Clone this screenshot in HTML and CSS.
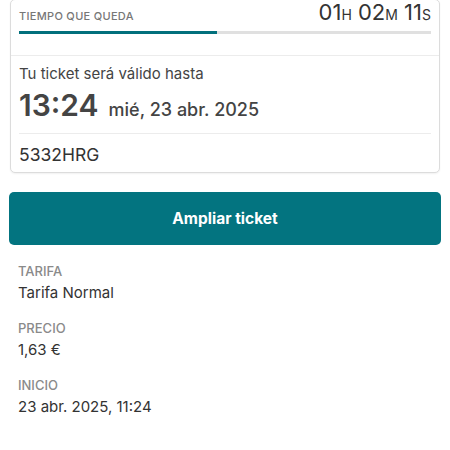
FILE: index.html
```html
<!DOCTYPE html>
<html lang="es">
<head>
<meta charset="utf-8">
<title>Ticket</title>
<link rel="stylesheet" href="styles.css">
</head>
<body>
<div class="page">
  <section class="card">
    <div class="timer">
      <div class="timer-row">
        <span class="timer-label">TIEMPO QUE QUEDA</span>
        <span class="timer-value">01<span class="unit">H</span> 02<span class="unit">M</span> 11<span class="unit">S</span></span>
      </div>
      <div class="progress"><div class="progress-fill" style="width:48%"></div></div>
    </div>
    <div class="validity">
      <p class="valid-label">Tu ticket será válido hasta</p>
      <div class="valid-time"><span class="hour">13:24</span><span class="date">mié, 23 abr. 2025</span></div>
      <div class="plate">5332HRG</div>
    </div>
  </section>
  <button class="cta" type="button">Ampliar ticket</button>
  <dl class="details">
    <div class="detail"><dt>TARIFA</dt><dd>Tarifa Normal</dd></div>
    <div class="detail"><dt>PRECIO</dt><dd>1,63 €</dd></div>
    <div class="detail"><dt>INICIO</dt><dd>23 abr. 2025, 11:24</dd></div>
  </dl>
</div>
</body>
</html>
```
FILE: styles.css
```css
* { box-sizing: border-box; }
html, body { margin: 0; padding: 0; background: #fff; }
body {
  font-family: Inter, "Noto Sans", "Liberation Sans", sans-serif;
  color: #333;
  overflow: hidden;
}
.page { padding: 0 9px; }

.card {
  margin: -1px 1px 0;
  border: 1px solid #dcdcdc;
  border-radius: 5px;
  box-shadow: 0 1px 2px rgba(0,0,0,0.06);
  background: #fff;
}
.timer {
  padding: 0 8px 21px;
  border-bottom: 1px solid #ececec;
}
.timer-row {
  display: flex;
  justify-content: space-between;
  align-items: baseline;
  height: 24px;
  line-height: 24px;
}
.timer-label {
  font-size: 11px;
  font-weight: 500;
  letter-spacing: 0.3px;
  color: #777;
}
.timer-value {
  font-size: 22px;
  color: #333;
}
.unit { font-size: 14px; }
.progress {
  margin-top: 7px;
  height: 3px;
  background: #e0e0e0;
}
.progress-fill { height: 100%; background: #02707c; }

.validity { padding: 8px 8px 6px; }
.valid-label {
  margin: 0;
  font-size: 15px;
  line-height: 20px;
  color: #444;
}
.valid-time {
  margin-top: 4px;
  padding-bottom: 11px;
  display: flex;
  align-items: baseline;
  gap: 10px;
  line-height: 34px;
}
.hour { font-size: 30px; font-weight: 600; color: #444; }
.date { font-size: 18px; line-height: 20px; font-weight: 500; color: #444; }
.plate {
  border-top: 1px solid #ececec;
  padding-top: 10px;
  font-size: 17.5px;
  line-height: 22px;
  color: #333;
}

.cta {
  display: block;
  width: 100%;
  margin-top: 19px;
  height: 53px;
  border: none;
  border-radius: 5px;
  background: #037480;
  color: #fff;
  font-family: inherit;
  font-size: 15.5px;
  font-weight: 700;
}

.details { margin: 18px 0 0; padding: 0 9px; }
.detail { margin-bottom: 17px; }
.detail dt {
  font-size: 13px;
  line-height: 16px;
  font-weight: 500;
  color: #8a8a8a;
}
.detail dd {
  margin: 4px 0 0;
  font-size: 15px;
  line-height: 20px;
  color: #333;
}
```
